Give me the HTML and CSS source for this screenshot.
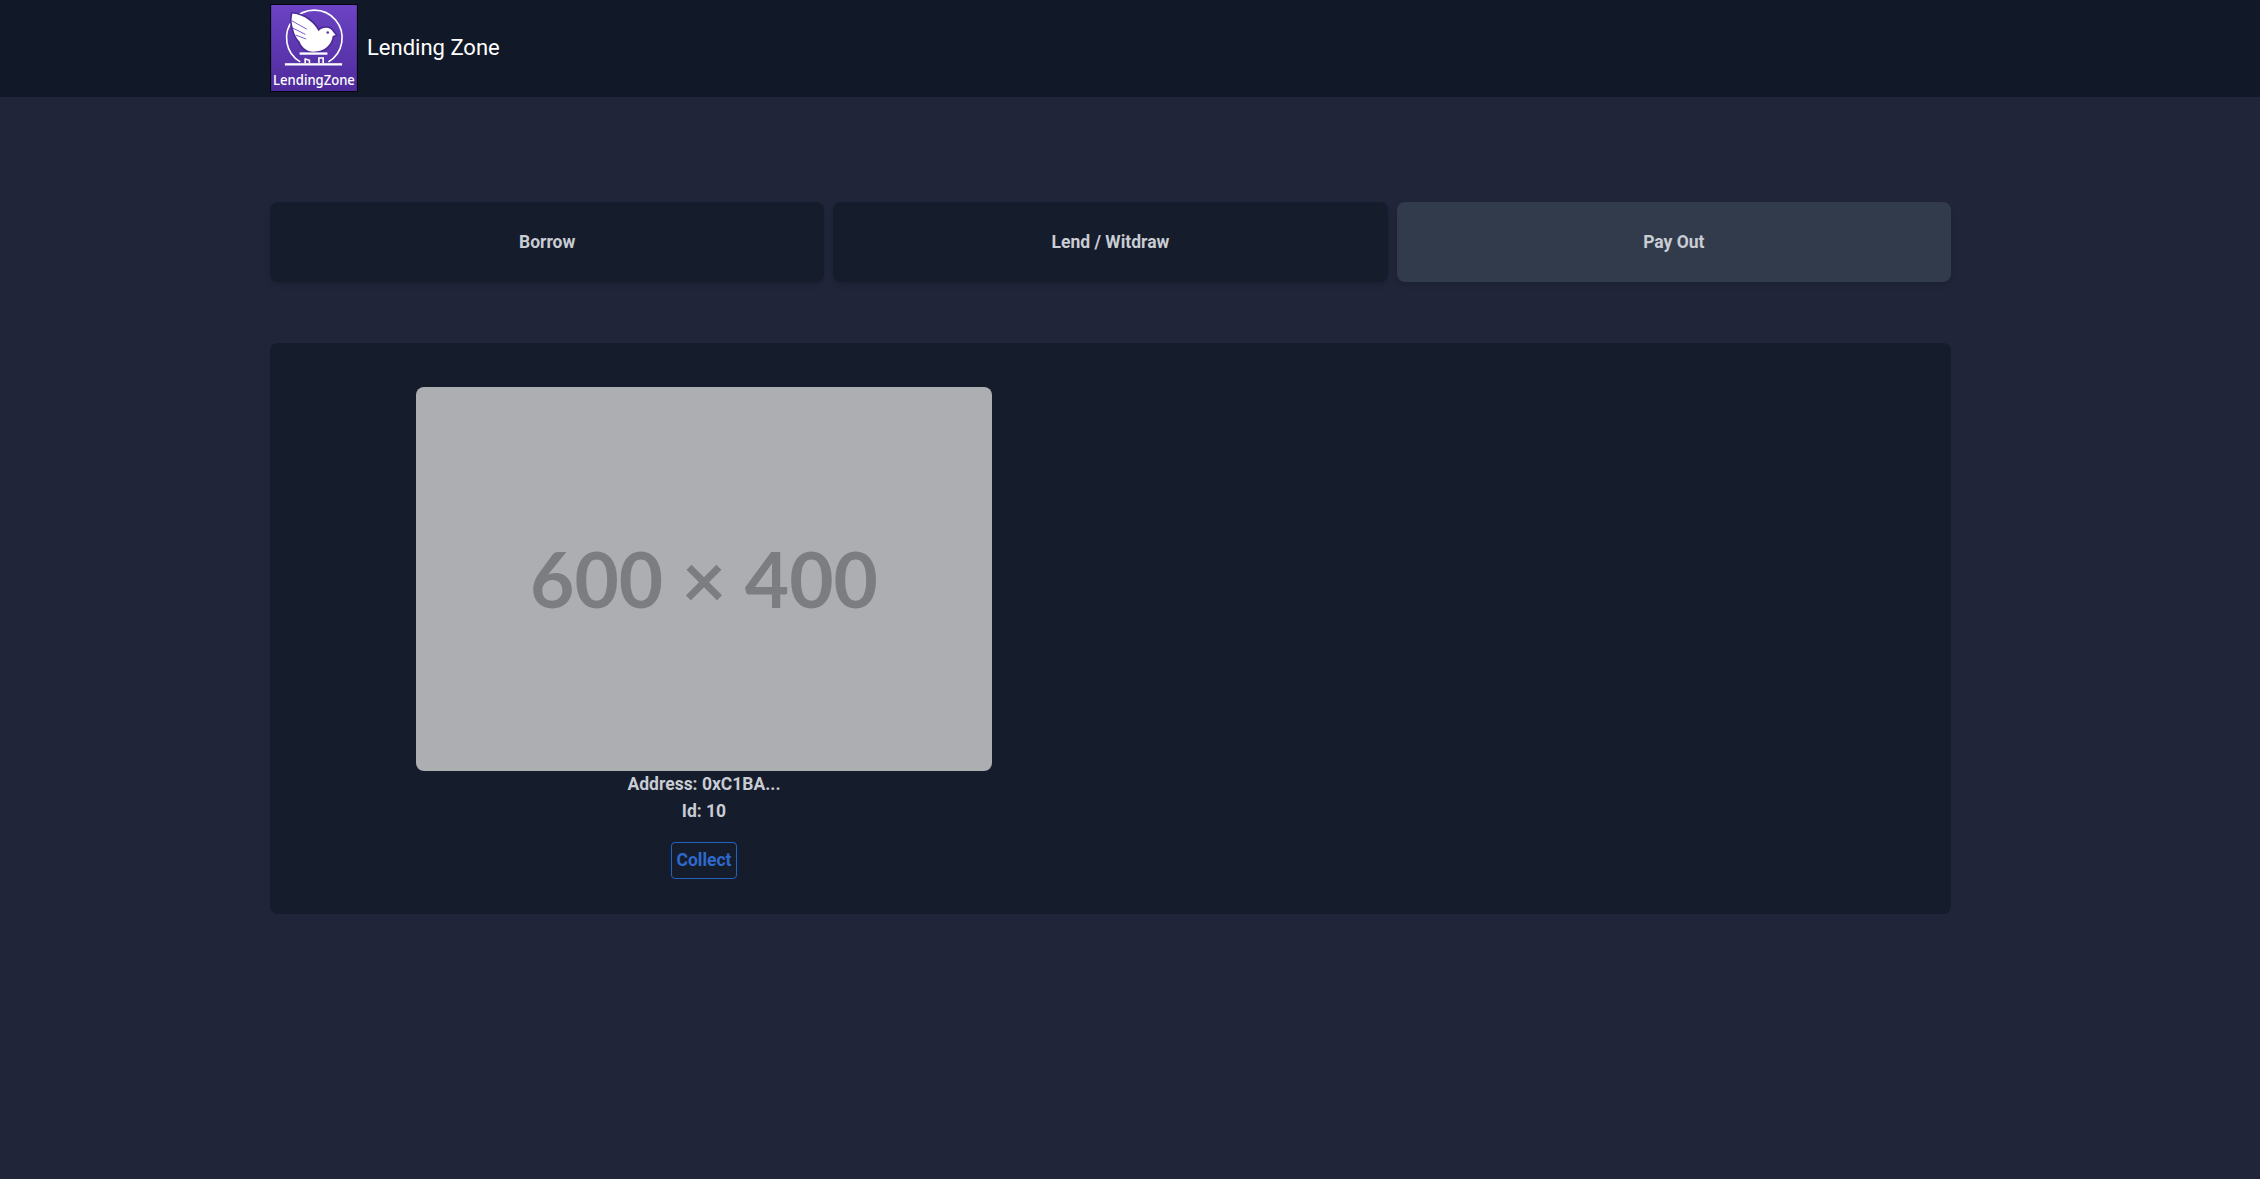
FILE: index.html
```html
<!DOCTYPE html>
<html lang="en">
<head>
<meta charset="utf-8">
<title>Lending Zone</title>
<link rel="stylesheet" href="styles.css">
</head>
<body>
<header class="topbar">
  <svg class="logo" viewBox="61 12 262 263" role="img" aria-label="LendingZone logo">
    <defs>
      <linearGradient id="logoBg" x1="0" y1="0" x2="0" y2="1">
        <stop offset="0" stop-color="#6b43c4"/>
        <stop offset="1" stop-color="#4f2b9c"/>
      </linearGradient>
    </defs>
    <rect x="61" y="12" width="262" height="263" fill="url(#logoBg)"/>
    <path class="logo-line" d="M150 186 A85 85 0 1 1 236 186"/>
    <path class="logo-halo" d="M126 38 C165 42 194 68 206 92 C214 80 242 76 250 94 L258 104 L249 107 C247 132 225 155 190 155 C170 155 154 142 148 124 C140 116 132 104 128 84 C123 70 122 54 126 38Z"/>
    <path class="logo-bird" d="M126 38 C165 42 194 68 206 92 C214 80 242 76 250 94 L258 104 L249 107 C247 132 225 155 190 155 C170 155 154 142 148 124 C140 116 132 104 128 84 C123 70 122 54 126 38Z"/>
    <path class="logo-feather" d="M124 60 L170 86 M126 82 L166 102 M136 104 L168 116"/>
    <circle class="logo-eye" cx="234" cy="96" r="4"/>
    <rect class="logo-fill" x="148" y="157" width="85" height="7"/>
    <path class="logo-thin" d="M165 190 V175 M165 177 L178 181 V190 M207 190 V174 H220 V190"/>
    <rect class="logo-fill" x="103" y="190" width="175" height="7"/>
    <text class="logo-text" x="192" y="258" textLength="250" lengthAdjust="spacingAndGlyphs">LendingZone</text>
  </svg>
  <span class="brand">Lending Zone</span>
</header>
<main class="content">
  <nav class="tabs">
    <button class="tab">Borrow</button>
    <button class="tab">Lend / Witdraw</button>
    <button class="tab tab-active">Pay Out</button>
  </nav>
  <section class="panel">
    <article class="card">
      <div class="placeholder">600 × 400</div>
      <p class="meta">Address: 0xC1BA...</p>
      <p class="meta">Id: 10</p>
      <button class="collect">Collect</button>
    </article>
  </section>
</main>
</body>
</html>
```
FILE: styles.css
```css
* { box-sizing: border-box; }
html, body { height: 100%; }
body {
  margin: 0;
  background: #202539;
  font-family: Roboto, "Liberation Sans", sans-serif;
  color: #c9ccd3;
}
.topbar {
  display: flex;
  align-items: center;
  gap: 9px;
  height: 97px;
  padding: 0 0 1px 270px;
  background: #111827;
}
.logo {
  display: block;
  width: 88px;
  height: 88px;
  border: 1px solid #05070c;
}
.logo-line { fill: none; stroke: #fff; stroke-width: 5; }
.logo-halo { fill: #4a2a96; stroke: #4a2a96; stroke-width: 10; stroke-linejoin: round; }
.logo-bird { fill: #fff; }
.logo-feather { fill: none; stroke: #7a5ac8; stroke-width: 3; }
.logo-eye { fill: #5a35ac; }
.logo-fill { fill: #fff; }
.logo-thin { fill: none; stroke: #fff; stroke-width: 5; }
.logo-text {
  fill: #fff;
  font-family: "Noto Sans", sans-serif;
  font-size: 42px;
  font-weight: 500;
  text-anchor: middle;
}
.brand { margin-bottom: 1px; font-size: 22px; color: #fff; }
.content {
  width: 1681px;
  margin-left: 270px;
  padding-top: 105px;
}
.tabs {
  display: grid;
  grid-template-columns: repeat(3, 1fr);
  gap: 9px;
}
.tab {
  height: 80px;
  padding: 0 0 1px;
  border: 0;
  border-radius: 8px;
  background: #151c2c;
  color: #c9ccd3;
  font: 700 17.5px Roboto, sans-serif;
  box-shadow: 0 4px 6px -1px rgba(0, 0, 0, .1), 0 2px 4px -2px rgba(0, 0, 0, .1);
}
.tab-active { background: #323b4c; }
.panel {
  height: 571px;
  margin-top: 61px;
  padding: 44px 0 0 146px;
  border-radius: 8px;
  background: #151c2c;
}
.card {
  display: flex;
  flex-direction: column;
  align-items: center;
  width: 576px;
}
.placeholder {
  display: flex;
  align-items: center;
  justify-content: center;
  width: 576px;
  height: 384px;
  padding-bottom: 2px;
  border-radius: 8px;
  background: #adaeb2;
  color: #7c7d81;
  font: 700 76.5px Lato, sans-serif;
}
.meta {
  margin: 0;
  font-size: 17.5px;
  font-weight: 700;
  line-height: 27px;
}
.collect {
  width: 66px;
  height: 37px;
  margin-top: 17px;
  padding: 0 0 2px;
  border: 1px solid #2563c0;
  border-radius: 4px;
  background: transparent;
  color: #2d6acb;
  font: 700 17.5px Roboto, sans-serif;
}
```
